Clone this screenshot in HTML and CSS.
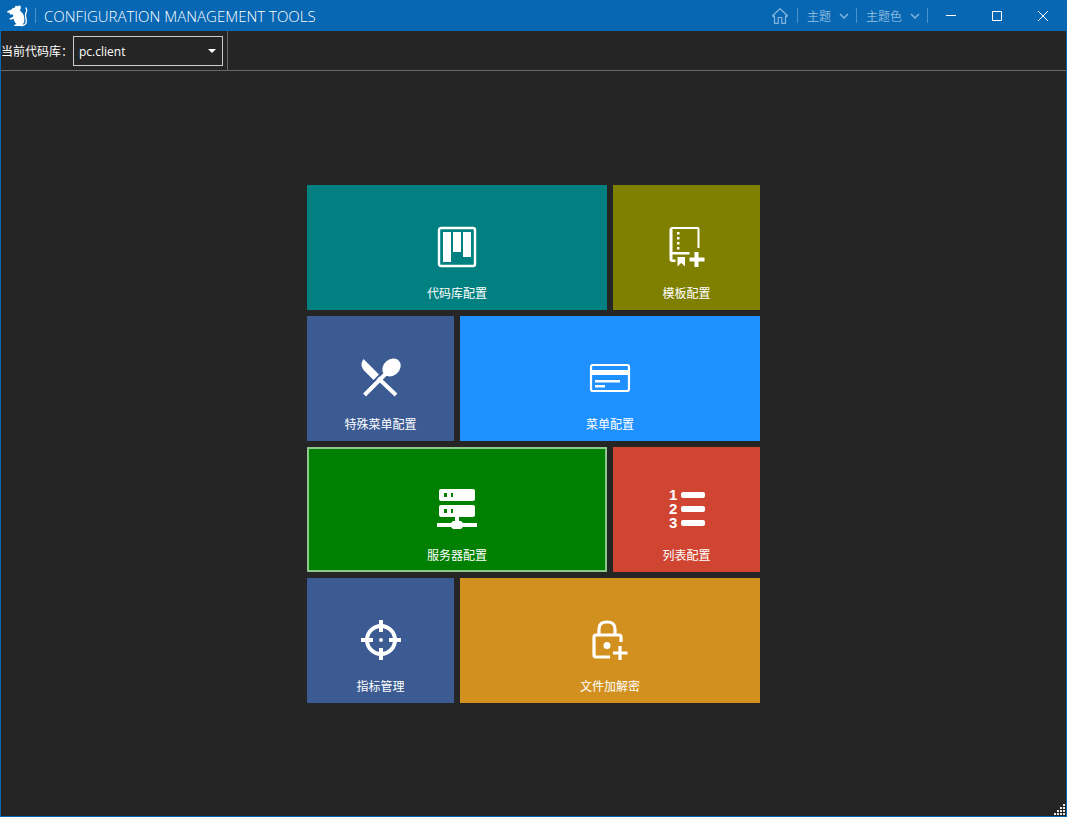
FILE: index.html
```
<!DOCTYPE html>
<html lang="zh-CN">
<head>
<meta charset="utf-8">
<title>Configuration Management Tools</title>
<link rel="stylesheet" href="styles.css">
</head>
<body>
<div class="window">
  <header class="titlebar">
    <svg class="logo" viewBox="0 0 24 24" aria-hidden="true">
      <path fill="currentColor" d="M9 3.500C8.500 1.500 11 1.200 11.500 2.600C12.500 .8 15.400 1.500 14.800 4C14.600 5.200 13.800 5.800 14.200 7C17 9 18.500 11.500 18.300 15C18.600 18 17.800 19.500 16.500 20.300L18 21.500V22H8.500L8 21L10.500 20L9 18.500L7.500 15L4 15.800L3.500 14.500L7 12.800L7.200 10.500H4L3.500 9L1 8.200L1.500 7L5 5.800L6.500 4.200Z"/>
      <path fill="none" stroke="currentColor" stroke-width="1.300" stroke-linecap="round" d="M15 21.500C19 21.800 20.800 19.500 20.200 16C19.600 13 18.700 10.500 20.300 8C21 6.500 20.700 5 20 4"/>
    </svg>
    <span class="separator"></span>
    <h1 class="title">CONFIGURATION MANAGEMENT TOOLS</h1>
    <nav class="commands">
      <button class="command home" aria-label="Home">
        <svg width="18" height="18" viewBox="0 0 18 18"><path fill="none" stroke="currentColor" stroke-width="1.200" stroke-linejoin="round" d="M1.500 8.800L9 1.700L16.500 8.800L15.500 9.800L14.500 8.900V16.400H10.800V10.500H7.200V16.400H3.500V8.900L2.500 9.800Z"/></svg>
      </button>
      <span class="separator"></span>
      <button class="command">主题<svg width="10" height="6" viewBox="0 0 10 6"><path class="chevron" d="M1 1L5 5L9 1"/></svg></button>
      <span class="separator"></span>
      <button class="command">主题色<svg width="10" height="6" viewBox="0 0 10 6"><path class="chevron" d="M1 1L5 5L9 1"/></svg></button>
      <span class="separator"></span>
    </nav>
    <div class="captions">
      <button class="caption" aria-label="Minimize"><svg width="10" height="10" viewBox="0 0 10 10"><path class="line" d="M0 4.500H10"/></svg></button>
      <button class="caption" aria-label="Maximize"><svg width="10" height="10" viewBox="0 0 10 10"><path class="line" d="M.5 .5H9.500V9.500H.5Z"/></svg></button>
      <button class="caption" aria-label="Close"><svg width="10" height="10" viewBox="0 0 10 10"><path class="line" d="M0 0L10 10M10 0L0 10"/></svg></button>
    </div>
  </header>

  <div class="toolbar">
    <div class="repository">
      <label for="repository">当前代码库：</label>
      <div class="dropdown">
        <select id="repository"><option>pc.client</option></select>
        <svg class="arrow" width="8" height="4" viewBox="0 0 8 4" aria-hidden="true"><path fill="currentColor" d="M0 0H8L4 4Z"/></svg>
      </div>
    </div>
  </div>

  <main class="content">
    <div class="tiles">
      <button class="tile wide teal">
        <svg class="icon" viewBox="0 0 40 40"><rect x="2" y="1" width="36" height="38" rx="2" fill="none" stroke="currentColor" stroke-width="2.400"/><path fill="currentColor" d="M6 5H14V35H6ZM16 5H24V25H16ZM26 5H34V30H26Z"/></svg>
        <span>代码库配置</span>
      </button>
      <button class="tile olive">
        <svg class="icon" viewBox="0 0 40 40"><path fill="none" stroke="currentColor" stroke-width="2" d="M31.500 21V2Q31.500 1 30.500 1H5"/><path fill="currentColor" d="M5.500 0V25H22.500V27.500H5.500V32.500H8.500V35H5.500Q2.500 35 2.500 32V3Q2.500 0 5.500 0ZM10.500 30H18V39.500L14.200 36L10.500 39.500ZM10 5H12.500V7.500H10ZM10 10H12.500V12.500H10ZM10 15H12.500V17.500H10ZM10 20H12.500V22.500H10ZM27.500 25H31.500V30.500H37.500V34.500H31.500V40H27.500V34.500H22.500V30.500H27.500Z"/></svg>
        <span>模板配置</span>
      </button>
      <button class="tile slate">
        <svg class="icon" viewBox="0 0 40 40"><path fill="currentColor" d="M2.500 1L18 16.500L12.500 22L2.500 12Q-1.500 6.500 2.500 1Z"/><path fill="none" stroke="currentColor" stroke-width="4" d="M3.500 37L25 15.500M17 20L35 37"/><ellipse cx="30.500" cy="9.500" rx="10" ry="8" transform="rotate(-40 30.500 9.500)" fill="currentColor"/></svg>
        <span>特殊菜单配置</span>
      </button>
      <button class="tile wide blue">
        <svg class="icon" viewBox="0 0 40 40"><rect x="1" y="7" width="38" height="26" rx="2" fill="none" stroke="currentColor" stroke-width="2.200"/><path fill="currentColor" d="M1 12H39V17H1ZM5 22H30V24.500H5ZM5 27H15V29.500H5Z"/></svg>
        <span>菜单配置</span>
      </button>
      <button class="tile wide green selected">
        <svg class="icon" viewBox="0 0 40 40"><path fill="currentColor" fill-rule="evenodd" d="M4 0H36Q38 0 38 2V10Q38 12 36 12H4Q2 12 2 10V2Q2 0 4 0ZM7 4V8H10V4ZM14 4V8H16V4ZM4 16H36Q38 16 38 18V26Q38 28 36 28H22V32H24L26 34H40V38H26L24 40H16L14 38H0V34H14L16 32H18V28H4Q2 28 2 26V18Q2 16 4 16ZM7 20V24H10V20ZM14 20V24H16V20Z"/></svg>
        <span>服务器配置</span>
      </button>
      <button class="tile red">
        <svg class="icon" viewBox="0 0 40 40"><g class="digits"><text x="2" y="11">1</text><text x="2" y="25">2</text><text x="2" y="39">3</text></g><rect x="14" y="3" width="24" height="6" rx="2" fill="currentColor"/><rect x="14" y="17" width="24" height="6" rx="2" fill="currentColor"/><rect x="14" y="31" width="24" height="6" rx="2" fill="currentColor"/></svg>
        <span>列表配置</span>
      </button>
      <button class="tile slate">
        <svg class="icon" viewBox="0 0 40 40"><circle cx="20" cy="20" r="14" fill="none" stroke="currentColor" stroke-width="4"/><path fill="none" stroke="currentColor" stroke-width="4" d="M20 0V12M20 28V40M0 20H12M28 20H40"/><circle cx="20" cy="20" r="2" fill="currentColor"/></svg>
        <span>指标管理</span>
      </button>
      <button class="tile wide amber">
        <svg class="icon" viewBox="0 0 40 40"><path fill="none" stroke="currentColor" stroke-width="3.200" d="M9 14V9Q9 2 17 2Q25 2 25 9V14M20 37H6Q4 37 4 35V17Q4 15 6 15H29Q31 15 31 17V22"/><circle cx="17" cy="25.500" r="3.500" fill="currentColor"/><path fill="none" stroke="currentColor" stroke-width="3.200" d="M30 26V40M23 33H37.500"/></svg>
        <span>文件加解密</span>
      </button>
    </div>
  </main>
  <svg class="grip" width="11" height="11" viewBox="0 0 11 11" aria-hidden="true"><path fill="currentColor" d="M9 0h2v2h-2zM6 3h2v2h-2zM9 3h2v2h-2zM3 6h2v2h-2zM6 6h2v2h-2zM9 6h2v2h-2zM0 9h2v2h-2zM3 9h2v2h-2zM6 9h2v2h-2zM9 9h2v2h-2z"/></svg>
</div>
</body>
</html>
```
FILE: styles.css
```
* {
  box-sizing: border-box;
}

body {
  margin: 0;
  font-family: "Open Sans", "Noto Sans CJK SC", sans-serif;
  font-size: 12px;
  color: #fff;
  background: #252525;
}

button,
select {
  font: inherit;
  color: inherit;
  margin: 0;
  padding: 0;
  border: 0;
  border-radius: 0;
  background: none;
}

svg {
  display: block;
  flex: none;
}

.window {
  position: relative;
  display: flex;
  flex-direction: column;
  min-height: 100vh;
  border: 1px solid #0767b3;
  border-top: 0;
}

.titlebar {
  display: flex;
  align-items: center;
  height: 31px;
  background: #0767b3;
}

.logo {
  width: 24px;
  height: 24px;
  margin: 0 5px;
}

.separator {
  width: 1px;
  height: 15px;
  background: #4a92cc;
}

.title {
  flex: 1;
  margin: 0 0 0 8px;
  font-size: 15px;
  font-weight: 300;
  line-height: 20px;
  white-space: nowrap;
}

.commands {
  display: flex;
  align-items: center;
  color: #83b5dc;
}

.command {
  display: flex;
  align-items: center;
  gap: 8px;
  height: 31px;
  padding: 0 7px 0 9px;
}

.home {
  padding-right: 8px;
}

.chevron {
  fill: none;
  stroke: currentColor;
  stroke-width: 1.5;
}

.captions {
  display: flex;
}

.caption {
  display: grid;
  place-items: center;
  width: 46px;
  height: 31px;
}

.line {
  fill: none;
  stroke: currentColor;
  stroke-width: 1;
}

.toolbar {
  display: flex;
  height: 40px;
  border-bottom: 1px solid #686868;
}

.repository {
  display: flex;
  align-items: center;
  padding-right: 4px;
  border-right: 1px solid #686868;
}

.repository label {
  width: 72px;
  white-space: nowrap;
}

.dropdown {
  position: relative;
}

.dropdown select {
  display: block;
  width: 150px;
  height: 30px;
  padding: 2px 24px 0 5px;
  border: 1px solid #ccc;
  background: #252525;
  appearance: none;
}

.arrow {
  position: absolute;
  top: 13px;
  right: 7px;
  pointer-events: none;
}

.content {
  flex: 1;
  display: grid;
  place-content: center;
}

.tiles {
  display: grid;
  grid-template-columns: repeat(3, 147px);
  grid-auto-rows: 125px;
  gap: 6px;
}

.tile {
  display: flex;
  flex-direction: column;
  align-items: center;
  justify-content: flex-end;
  gap: 18px;
  padding-bottom: 7px;
  line-height: 18px;
}

.wide {
  grid-column: span 2;
}

.icon {
  width: 40px;
  height: 40px;
  overflow: visible;
}

.digits {
  fill: currentColor;
  font: bold 15px "Liberation Sans", sans-serif;
}

.teal { background: #008080; }
.olive { background: #808000; }
.slate { background: #3b5b92; }
.blue { background: #1e90ff; }
.green { background: #008000; }
.red { background: #d04532; }
.amber { background: #d2911e; }

.selected {
  box-shadow: inset 0 0 0 2px #8dc88d;
}

.grip {
  position: absolute;
  right: 1px;
  bottom: 1px;
  color: #e8e8e8;
}
```
